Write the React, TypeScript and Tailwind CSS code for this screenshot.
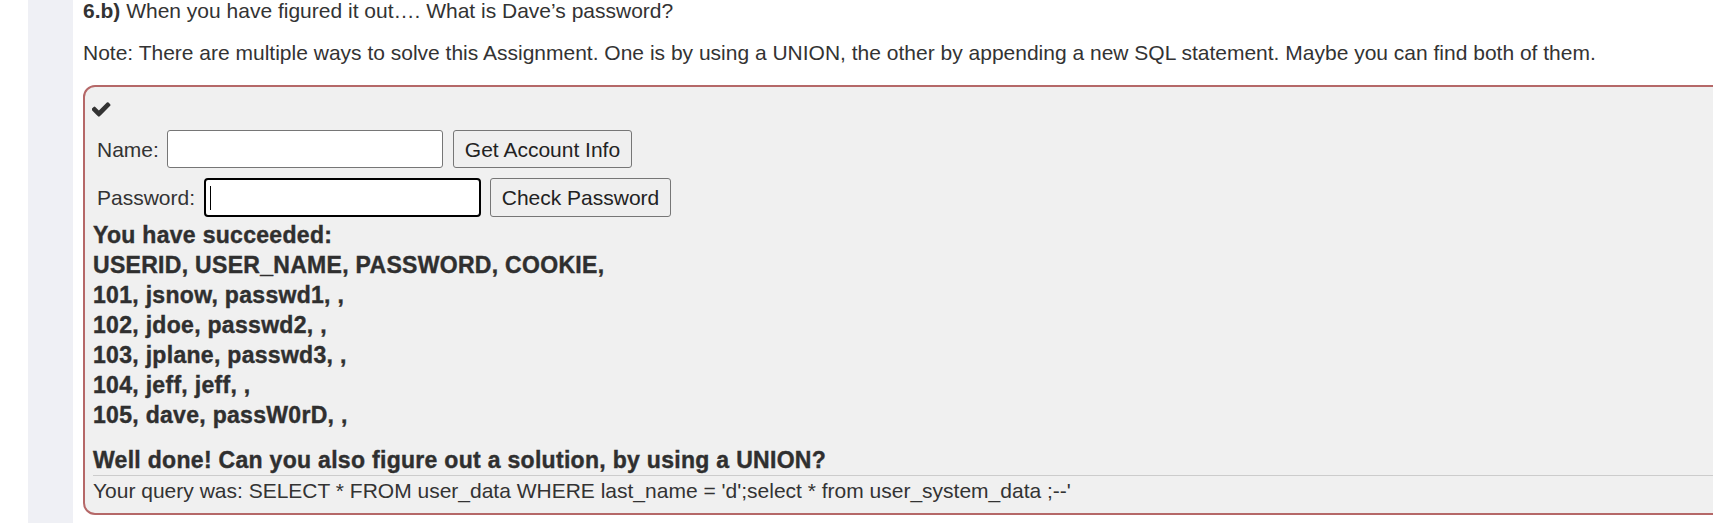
import React from "react";

const rows = [
  "You have succeeded:",
  "USERID, USER_NAME, PASSWORD, COOKIE,",
  "101, jsnow, passwd1, ,",
  "102, jdoe, passwd2, ,",
  "103, jplane, passwd3, ,",
  "104, jeff, jeff, ,",
  "105, dave, passW0rD, ,",
];

function Check() {
  return (
    <svg width="19" height="15" viewBox="150 370 1560 1130" className="block -ml-[1px]">
      <path
        fill="#333333"
        d="M1671 566q0 40-28 68l-724 724-136 136q-28 28-68 28t-68-28l-136-136-362-362q-28-28-28-68t28-68l136-136q28-28 68-28t68 28l294 295 656-657q28-28 68-28t68 28l136 136q28 28 28 68z"
      />
    </svg>
  );
}

export default function App() {
  return (
    <div
      className="flex w-[1713px] h-[523px] bg-white overflow-hidden text-[#333333]"
      style={{ fontFamily: '"Liberation Sans", Arial, sans-serif' }}
    >
      <div className="w-[28px] shrink-0 bg-white" />
      <div className="w-[45px] shrink-0 bg-[#eff0f5]" />
      <div className="flex-1 min-w-0 pl-[10px] text-[21px] leading-[21px]">
        <p className="whitespace-nowrap">
          <b>6.b)</b> When you have figured it out…. What is Dave’s password?
        </p>
        <p className="mt-[21px] whitespace-nowrap">
          Note: There are multiple ways to solve this Assignment. One is by using a UNION, the other by appending a new SQL statement. Maybe you can find both of them.
        </p>
        <div className="mt-[22px] w-[1700px] h-[430px] border-2 border-[#b56868] rounded-[12px] bg-[#f0f0f0] pl-[8px] pt-[15px]">
          <Check />
          <div className="flex items-center mt-[13px] pl-[4px] h-[38px]">
            <span className="w-[70px] shrink-0">Name:</span>
            <div className="w-[276px] h-[38px] bg-white border border-[#767676] rounded-[3px]" />
            <button className="ml-[10px] w-[179px] h-[38px] bg-[#efefef] border border-[#767676] rounded-[3px] text-[21px] text-[#222]">
              Get Account Info
            </button>
          </div>
          <div className="flex items-center mt-[10px] pl-[4px] h-[39px]">
            <span className="w-[107px] shrink-0">Password:</span>
            <div className="w-[277px] h-[39px] bg-white border-2 border-black rounded-[4px] flex items-center pl-[4px]">
              <span className="block w-px h-[24px] bg-black" />
            </div>
            <button className="ml-[9px] w-[181px] h-[39px] bg-[#efefef] border border-[#767676] rounded-[3px] text-[21px] text-[#222]">
              Check Password
            </button>
          </div>
          <div className="mt-[3px] font-bold text-[23px] leading-[30px] tracking-[0.3px] text-[#2f2f2f] [-webkit-text-stroke:0.4px_#2f2f2f] whitespace-nowrap">
            {rows.map((r) => (
              <div key={r}>{r}</div>
            ))}
            <div className="mt-[15px]">Well done! Can you also figure out a solution, by using a UNION?</div>
          </div>
          <div className="border-t border-[#cccccc] pt-[2px] leading-[25px] text-[21px] whitespace-nowrap">
            Your query was: SELECT * FROM user_data WHERE last_name = 'd';select * from user_system_data ;--'
          </div>
        </div>
      </div>
    </div>
  );
}
